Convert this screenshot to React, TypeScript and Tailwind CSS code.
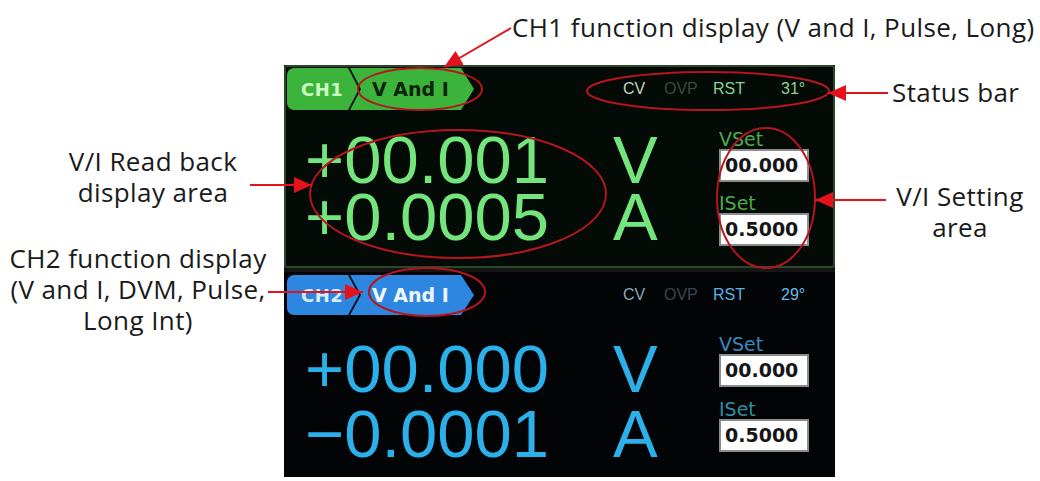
import React from "react";

type Pt = [number, number];

// arrowhead triangle pointing at `tip`, coming from `from`
function head(from: Pt, tip: Pt, len = 18, half = 8) {
  const dx = tip[0] - from[0];
  const dy = tip[1] - from[1];
  const d = Math.hypot(dx, dy);
  const ux = dx / d;
  const uy = dy / d;
  const bx = tip[0] - ux * len;
  const by = tip[1] - uy * len;
  return `${tip[0]},${tip[1]} ${bx - uy * half},${by + ux * half} ${bx + uy * half},${by - ux * half}`;
}

const ARROWS: { from: Pt; tip: Pt }[] = [
  { from: [511, 28], tip: [444, 67] },
  { from: [888, 93], tip: [828, 93] },
  { from: [250, 185], tip: [312, 185] },
  { from: [886, 200], tip: [815, 200] },
  { from: [268, 292], tip: [363, 292] },
];

const RINGS = [
  { cx: 420, cy: 89, rx: 62, ry: 21 },
  { cx: 708, cy: 91, rx: 121, ry: 19 },
  { cx: 458, cy: 194, rx: 148, ry: 64 },
  { cx: 766, cy: 198, rx: 49, ry: 70 },
  { cx: 427, cy: 292, rx: 58, ry: 24 },
];

function Annotations() {
  return (
    <svg
      className="absolute inset-0 pointer-events-none"
      width={1040}
      height={481}
      viewBox="0 0 1040 481"
    >
      {RINGS.map((r, i) => (
        <ellipse key={i} {...r} fill="none" stroke="#b5161e" strokeWidth={2} />
      ))}
      {ARROWS.map((a, i) => (
        <g key={i}>
          <line
            x1={a.from[0]}
            y1={a.from[1]}
            x2={a.tip[0]}
            y2={a.tip[1]}
            stroke="#e5121c"
            strokeWidth={2}
          />
          <polygon points={head(a.from, a.tip)} fill="#e5121c" />
        </g>
      ))}
    </svg>
  );
}

function Tab({ ch, blue }: { ch: string; blue?: boolean }) {
  const bg = blue ? "bg-[#2d87e1]" : "bg-[#3cb43c]";
  return (
    <div className="flex h-full">
      <div
        className={`${bg} w-[72px] h-full rounded-l-[7px] flex items-center pl-[14px] [clip-path:polygon(0_0,61px_0,72px_50%,61px_100%,0_100%)]`}
      >
        <span
          className={`text-[18px] font-bold tracking-[0.5px] ${blue ? "text-[#d6ecff]" : "text-[#cdfcc4]"}`}
        >
          {ch}
        </span>
      </div>
      <div
        className={`${bg} -ml-[9px] w-[124px] h-full flex items-center pl-[22px] [clip-path:polygon(0_0,111px_0,124px_50%,111px_100%,0_100%,11px_50%)]`}
      >
        <span
          className={`text-[19px] font-bold ${blue ? "text-[#eef6ff]" : "text-[#0c240c]"}`}
        >
          V And I
        </span>
      </div>
    </div>
  );
}

function Status({ temp, blue }: { temp: string; blue?: boolean }) {
  return (
    <div className="flex items-center ml-[149px] text-[16px] font-['Liberation_Sans',sans-serif]">
      <span className={`w-[41px] ${blue ? "text-[#8fa6b6]" : "text-[#c3d4c2]"}`}>CV</span>
      <span className={`w-[49px] ${blue ? "text-[#3c4650]" : "text-[#3a4a3a]"}`}>OVP</span>
      <span className={`w-[68px] ${blue ? "text-[#5bb0e8]" : "text-[#82d48c]"}`}>RST</span>
      <span className={blue ? "text-[#6fb6e6]" : "text-[#8fd494]"}>{temp}</span>
    </div>
  );
}

function SetBox({ label, value, labelColor }: { label: string; value: string; labelColor: string }) {
  return (
    <div className="flex flex-col">
      <span className={`h-[20px] leading-[20px] text-[19px] ${labelColor} font-['DejaVu_Sans',sans-serif]`}>
        {label}
      </span>
      <div className="w-[90px] h-[33px] bg-white border-2 border-[#8c8c8c] flex items-center pl-[4px]">
        <span className="text-[19px] font-semibold text-[#161616] font-['DejaVu_Sans',sans-serif]">
          {value}
        </span>
      </div>
    </div>
  );
}

function Channel({
  ch,
  blue,
  temp,
  volts,
  amps,
}: {
  ch: string;
  blue?: boolean;
  temp: string;
  volts: string;
  amps: string;
}) {
  const digit = blue ? "text-[#2cb0ea]" : "text-[#74e47d]";
  const lead = blue ? "mt-[21px] leading-[65px]" : "mt-[21px] leading-[57px]";
  return (
    <div
      className={
        blue
          ? "h-[205px] bg-[#020406] flex flex-col"
          : "h-[203px] bg-[#040a05] border-2 border-[#2d472b] rounded-[3px] flex flex-col"
      }
    >
      <div
        className={`flex items-center font-['DejaVu_Sans',sans-serif] ${blue ? "h-[40px] mt-[3px] ml-[3px]" : "h-[42px] mt-[1px] ml-[1px]"}`}
      >
        <Tab ch={ch} blue={blue} />
        <Status temp={temp} blue={blue} />
      </div>
      <div className={`flex ${blue ? "pl-[21px]" : "pl-[19px]"}`}>
        <div className={`w-[308px] text-[67px] font-['Liberation_Sans',sans-serif] ${digit} ${lead}`}>
          <div>{volts}</div>
          <div>{amps}</div>
        </div>
        <div className={`w-[106px] text-[67px] font-['Liberation_Sans',sans-serif] ${digit} ${lead}`}>
          <div>V</div>
          <div>A</div>
        </div>
        <div className={`flex flex-col ${blue ? "pt-[19px] gap-[12px]" : "pt-[19px] gap-[11px]"}`}>
          <SetBox label="VSet" value="00.000" labelColor={blue ? "text-[#3b88bc]" : "text-[#4aaa4c]"} />
          <SetBox label="ISet" value="0.5000" labelColor={blue ? "text-[#2f8ea4]" : "text-[#4aaa4c]"} />
        </div>
      </div>
    </div>
  );
}

export default function App() {
  const label =
    "absolute text-[26px] leading-[31px] tracking-[0.4px] text-[#1a1a1a] font-['Open_Sans','Lato',sans-serif]";
  return (
    <div className="relative w-[1040px] h-[481px] bg-white overflow-hidden">
      <div className="pt-[65px] pl-[284px]">
        <div className="w-[551px] h-[412px] bg-[#151515] flex flex-col gap-[4px]">
          <Channel ch="CH1" temp="31°" volts="+00.001" amps="+0.0005" />
          <Channel ch="CH2" blue temp="29°" volts="+00.000" amps="−0.0001" />
        </div>
      </div>

      <div className={`${label} left-[512px] top-[12px] whitespace-nowrap`}>
        CH1 function display (V and I, Pulse, Long)
      </div>
      <div className={`${label} left-[892px] top-[77px] whitespace-nowrap`}>Status bar</div>
      <div className={`${label} left-[38px] w-[230px] top-[146px] text-center`}>
        V/I Read back
        <br />
        display area
      </div>
      <div className={`${label} left-[874px] w-[172px] top-[181px] text-center`}>
        V/I Setting
        <br />
        area
      </div>
      <div className={`${label} left-[0px] w-[276px] top-[243px] text-center`}>
        CH2 function display
        <br />
        (V and I, DVM, Pulse,
        <br />
        Long Int)
      </div>

      <Annotations />
    </div>
  );
}
